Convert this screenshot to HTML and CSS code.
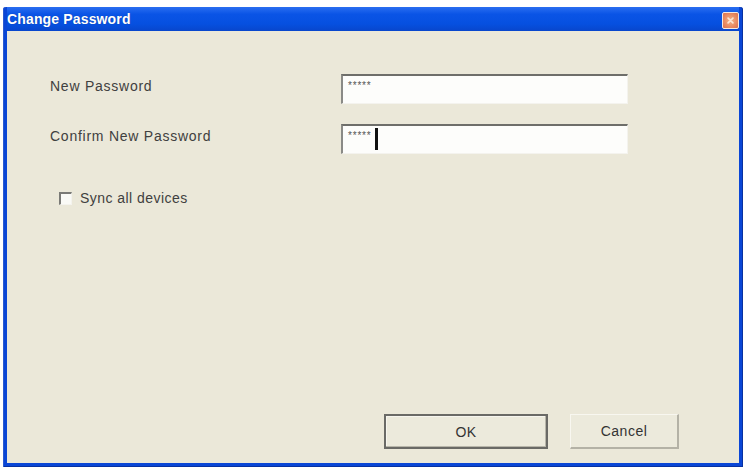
FILE: index.html
```html
<!DOCTYPE html>
<html>
<head>
<meta charset="utf-8">
<link rel="stylesheet" href="styles.css">
</head>
<body>
<div class="window">
  <div class="titlebar">
    <span class="title">Change Password</span>
    <span class="close"><svg width="16" height="16" viewBox="0 0 16 16"><path d="M5 5 L11 11 M11 5 L5 11" stroke="#fbe6d4" stroke-width="2" stroke-linecap="round"/></svg></span>
  </div>
  <div class="body">
    <div class="form">
      <div class="label">New Password</div>
      <div class="field"><span class="mask">*****</span></div>
      <div class="label">Confirm New Password</div>
      <div class="field"><span class="mask">*****</span><span class="caret"></span></div>
    </div>
    <div class="check">
      <span class="box"></span>
      <span class="check-label">Sync all devices</span>
    </div>
    <div class="buttons">
      <div class="btn btn-default">OK</div>
      <div class="btn">Cancel</div>
    </div>
  </div>
</div>
</body>
</html>
```

FILE: styles.css
```css
html, body {
  margin: 0;
  padding: 0;
  background: #ffffff;
  width: 745px;
  height: 467px;
  overflow: hidden;
}

.window {
  margin: 7px 2px 0 3px;
  height: 460px;
  display: flex;
  flex-direction: column;
  box-sizing: border-box;
  background: #0a46d6;
  border-radius: 3px 3px 0 0;
  padding: 0 4px 4px 4px;
  box-shadow: inset 1px 0 0 #2a5ad0, inset -1px 0 0 #0831a0, inset 0 -1px 0 #0831a0;
}

.titlebar {
  height: 24px;
  flex: none;
  display: flex;
  align-items: center;
  justify-content: space-between;
  padding: 0 0 0 0;
  background: linear-gradient(180deg, #2a6ef0 0%, #0a54e6 30%, #0650e0 70%, #0846cc 100%);
}

.title {
  font-family: "Liberation Sans", Arial, sans-serif;
  font-weight: bold;
  font-size: 14px;
  color: #ffffff;
  letter-spacing: 0.15px;
  text-shadow: 0 0 1px rgba(0,0,0,0.3);
}

.close {
  width: 15px;
  height: 15px;
  margin-top: 3px;
  border: 1px solid #f4e8e0;
  border-radius: 2px;
  background: radial-gradient(circle at 50% 50%, #f2b48a 0%, #e88a62 60%, #d8704c 100%);
  display: flex;
  align-items: center;
  justify-content: center;
}

.close svg {
  width: 13px;
  height: 13px;
}

.body {
  flex: 1;
  background: #ebe8d9;
  display: flex;
  flex-direction: column;
  padding: 43px 60px 14px 43px;
  font-family: "Liberation Sans", Arial, sans-serif;
  font-size: 14px;
  color: #404040;
  letter-spacing: 0.75px;
}

.form {
  display: grid;
  grid-template-columns: 291px 287px;
  grid-auto-rows: 30px;
  row-gap: 20px;
  align-items: center;
}

.label {
  padding-bottom: 6px;
}

.field {
  height: 30px;
  box-sizing: border-box;
  background: #fdfdfb;
  border-top: 2px solid #6e6e6a;
  border-left: 2px solid #8a8a86;
  border-right: 1px solid #f4f3ee;
  border-bottom: 1px solid #f4f3ee;
  display: flex;
  align-items: flex-start;
  padding: 5px 0 0 5px;
}

.mask {
  font-size: 10px;
  line-height: 10px;
  letter-spacing: 0.8px;
  color: #555;
}

.caret {
  width: 3px;
  height: 22px;
  margin-top: -3px;
  margin-left: 4px;
  background: #111;
}

.check {
  margin-top: 36px;
  margin-left: 9px;
  display: flex;
  align-items: center;
  gap: 8px;
}

.box {
  width: 13px;
  height: 13px;
  box-sizing: border-box;
  background: #fafaf6;
  border-top: 2px solid #7a7a76;
  border-left: 2px solid #7a7a76;
  border-right: 1px solid #f4f3ee;
  border-bottom: 1px solid #f4f3ee;
}

.check-label {
  padding-bottom: 1px;
  letter-spacing: 0.45px;
}

.buttons {
  margin-top: auto;
  display: flex;
  justify-content: flex-end;
  gap: 22px;
}

.btn {
  height: 35px;
  width: 109px;
  box-sizing: border-box;
  display: flex;
  align-items: center;
  justify-content: center;
  background: #eceadc;
  border-top: 1px solid #f8f7f0;
  border-left: 1px solid #f8f7f0;
  border-right: 2px solid #b4b2a6;
  border-bottom: 2px solid #b4b2a6;
  color: #333;
  letter-spacing: 0.5px;
}

.btn-default {
  width: 164px;
  border: 2px solid #6a6a66;
  box-shadow: inset -1px -1px 0 #b8b6aa, inset 1px 1px 0 #f6f5ee;
}
```
